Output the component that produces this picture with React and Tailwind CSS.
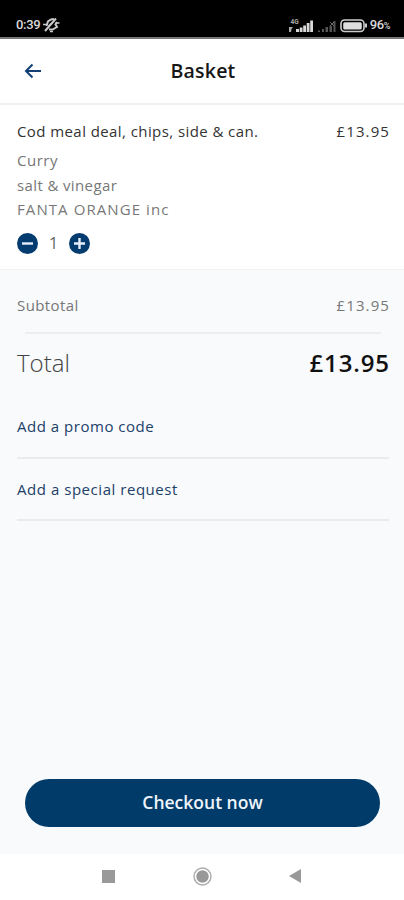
import React, { useState } from "react";

const extras = [
  { name: "Curry", style: "tracking-[0.5px]" },
  { name: "salt & vinegar", style: "tracking-[0.38px]" },
  { name: "FANTA ORANGE inc", style: "tracking-[1.08px]" },
];

const StatusBar = () => (
  <div className="flex h-[39px] items-start justify-between border-b-2 border-[#777] bg-black pt-[17px] pr-[14px] pl-4 font-['Roboto',sans-serif] text-[#d8d8d8]">
    <div className="flex items-center gap-[2px]">
      <span className="text-[13px] leading-4 font-medium tracking-[-0.3px]">0:39</span>
      <svg width="18" height="16" viewBox="0 0 18 16" fill="none" stroke="#c9c9c9" strokeWidth="2">
        <path d="M4.500 9 6 4.500 9 2.500 12 2M7 12.500h3.500L15 10 13.500 7.500 15 5" />
        <path d="M3 14 14 1.500M6.500 9.500 11 5" />
        <path d="M1 7.500h4M8 14.500h3M13.500 6h4" strokeWidth="1.700" />
      </svg>
    </div>
    <div className="flex items-center">
      <svg width="48" height="16" viewBox="0 0 48 16" className="mr-[3px]">
        <text x="1.500" y="5.500" fontSize="6.500" fontWeight="700" fill="#aaa">4G</text>
        <path d="M0 9h4l-1.500 2L2 14H0z" fill="#aaa" />
        <path d="M7 11h3v3H7zM10.700 9.500h2.800v4.500h-2.800zM14.200 7.500h2.800v6.500h-2.800zM17.700 5h2.800v9h-2.800zM21.200 2.500H24V14h-2.800z" fill="#d8d8d8" />
        <path d="M29 12.500h2v1.500h-2zM33 11h2v3h-2zM36.500 9h2.500v5h-2.500zM40.500 8h2.500v6h-2.500zM44.500 3h2v11h-2z" fill="#555" />
        <path d="m41 4 4 4m0-4-4 4" stroke="#666" />
      </svg>
      <svg width="28" height="16" viewBox="0 0 28 16">
        <rect x="1" y="2" width="23" height="11.500" rx="3.500" fill="none" stroke="#ccc" strokeWidth="1.600" />
        <rect x="3.200" y="4.200" width="18.600" height="7.200" rx="1.500" fill="#ddd" />
        <path d="M25 5.500h2v4h-2z" fill="#ccc" />
      </svg>
      <span className="ml-[2px] text-[13px] leading-4 font-medium tracking-[-0.4px]">
        96<span className="text-[9px]">%</span>
      </span>
    </div>
  </div>
);

const Header = () => (
  <header className="flex h-[66px] items-center border-b-2 border-[#f0f0f1] bg-white px-6">
    <button aria-label="Back" className="w-[18px]">
      <svg width="18" height="18" viewBox="0 0 18 18" fill="none" stroke="#123f74" strokeWidth="2">
        <path d="M17 9H2M8.500 2.500 2 9l6.500 6.500" />
      </svg>
    </button>
    <h1 className="flex-1 pr-[16px] text-center text-[19.5px] font-semibold tracking-[0.2px] text-[#171717]">Basket</h1>
  </header>
);

const QuantityButton = ({ label, path, onClick }) => (
  <button aria-label={label} onClick={onClick} className="flex size-[21px] items-center justify-center rounded-full bg-[#043c70]">
    <svg width="13" height="13" viewBox="0 0 13 13" stroke="#e8eefa" strokeWidth="2.400">
      <path d={path} />
    </svg>
  </button>
);

const App = () => {
  const [quantity, setQuantity] = useState(1);

  return (
    <div className="flex h-[900px] w-[404px] flex-col overflow-hidden bg-[#f8fafc] font-['Open_Sans',sans-serif]">
      <StatusBar />
      <Header />

      <section className="h-[165px] border-b border-[#f1f2f3] bg-white pt-[14px] pr-[15px] pl-[17px]">
        <div className="flex justify-between text-[15px] leading-6 text-[#333]">
          <h2 className="font-medium tracking-[0.42px]">Cod meal deal, chips, side &amp; can.</h2>
          <span className="-mr-px tracking-[1.1px]">£13.95</span>
        </div>
        <ul className="mt-[5px] text-[15px] leading-[24.500px] text-[#777]">
          {extras.map((extra) => (
            <li key={extra.name} className={extra.style}>{extra.name}</li>
          ))}
        </ul>
        <div className="mt-[11px] flex items-center">
          <QuantityButton label="Remove one" path="M1 6.500h11" onClick={() => setQuantity(Math.max(1, quantity - 1))} />
          <span className="w-[31px] text-center text-base leading-[21px] text-[#666]">{quantity}</span>
          <QuantityButton label="Add one" path="M1 6.500h11M6.500 1v11" onClick={() => setQuantity(quantity + 1)} />
        </div>
      </section>

      <section className="pr-[15px] pl-[17px]">
        <div className="flex h-[62px] items-center justify-between pt-[8px] text-[15px] text-[#777]">
          <span className="tracking-[0.4px]">Subtotal</span>
          <span className="-mr-px tracking-[1.1px]">£13.95</span>
        </div>
        <div className="mr-2 ml-2 h-[2px] bg-[#eceef0]" />
        <div className="flex h-[60px] items-center justify-between pb-[2px] text-[24px]">
          <span className="font-light text-[#444]">Total</span>
          <span className="-mr-px font-semibold tracking-[0.9px] text-[#111]">£13.95</span>
        </div>
        <button className="flex h-[65px] w-full items-center border-b-2 border-[#e9ebed] pt-px text-[15px] font-medium tracking-[0.52px] text-[#1c4068]">Add a promo code</button>
        <button className="flex h-[62px] w-full items-center border-b-2 border-[#e9ebed] text-[15px] font-medium tracking-[0.54px] text-[#1c4068]">Add a special request</button>
      </section>

      <div className="mt-auto pr-6 pb-[27px] pl-[25px]">
        <button className="h-[48px] w-full rounded-full bg-[#003b69] pb-[2px] text-[17.5px] font-semibold text-[#eff4fb]">Checkout now</button>
      </div>

      <nav className="flex h-[46px] items-center bg-white pb-[2px] pl-[102px]">
        <div className="size-[13px] bg-[#999]" />
        <svg className="ml-[78px]" width="19" height="19" viewBox="0 0 19 19">
          <circle cx="9.500" cy="9.500" r="8.500" fill="none" stroke="#aaa" strokeWidth="1.400" />
          <circle cx="9.500" cy="9.500" r="6.200" fill="#999" />
        </svg>
        <svg className="ml-[77px]" width="12" height="14" viewBox="0 0 12 14">
          <path d="M12 0v14L0 7z" fill="#999" />
        </svg>
      </nav>
    </div>
  );
};

export default App;
